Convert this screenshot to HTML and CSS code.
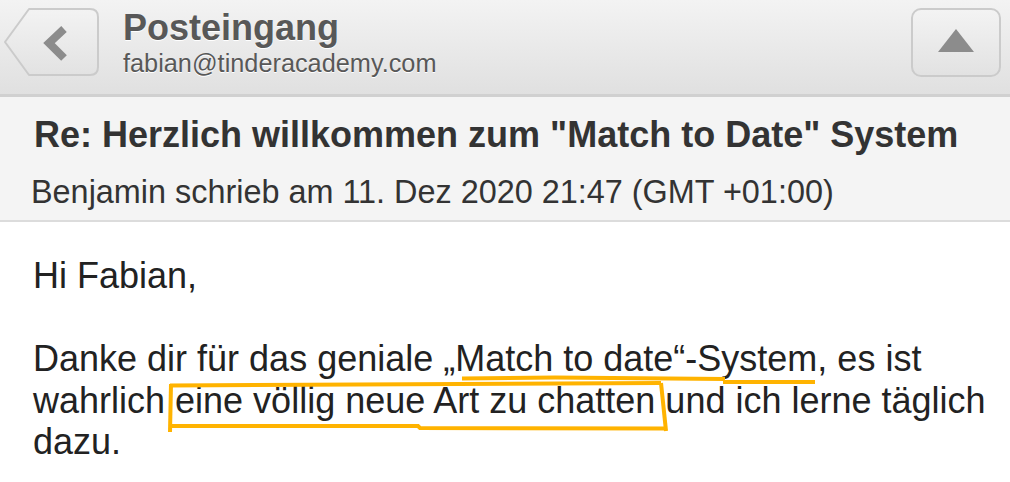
FILE: index.html
```html
<!DOCTYPE html>
<html lang="de">
<head>
<meta charset="utf-8">
<title>Posteingang</title>
<link rel="stylesheet" href="styles.css">
</head>
<body>
<div class="page">
  <header class="topbar">
    <div class="back-btn" aria-label="Zurück">
      <svg width="96" height="70" viewBox="0 0 96 70">
        <defs>
          <linearGradient id="bg1" x1="0" y1="0" x2="0" y2="1">
            <stop offset="0" stop-color="#f3f3f3"/>
            <stop offset="1" stop-color="#e2e2e2"/>
          </linearGradient>
        </defs>
        <path d="M1,35 L25,2 L86,2 Q94,2 94,10 L94,60 Q94,68 86,68 L25,68 Z" fill="url(#bg1)" stroke="#cbcbcb" stroke-width="2" stroke-linejoin="round"/>
        <path d="M60,22 L45,36 L60,51" fill="none" stroke="#8c8c8c" stroke-width="8" stroke-linecap="butt" stroke-linejoin="miter"/>
      </svg>
    </div>
    <div class="title-block">
      <div class="title">Posteingang</div>
      <div class="account">fabian@tinderacademy.com</div>
    </div>
    <div class="up-btn" aria-label="Nach oben">
      <svg width="36" height="24" viewBox="0 0 36 24">
        <path d="M18,0 L36,23 L0,23 Z" fill="#8c8c8c"/>
      </svg>
    </div>
  </header>

  <section class="meta">
    <h1 class="subject">Re: Herzlich willkommen zum "Match to Date" System</h1>
    <div class="sender">Benjamin schrieb am 11. Dez 2020 21:47 (GMT +01:00)</div>
  </section>

  <main class="message">
    <p>Hi Fabian,</p>
    <p>Danke dir für das geniale „Match to date“-System, es ist wahrlich eine völlig neue Art zu chatten und ich lerne täglich dazu.</p>
    <svg class="marks" width="1010" height="260" viewBox="0 222 1010 260">
      <g fill="none" stroke="#ffb300" stroke-width="4">
        <path d="M462,378.5 L555,377.5 L725,379"/>
        <path d="M723,382 L815,382"/>
        <path d="M170,385.5 L661,383"/>
        <path d="M661,383 L666,431"/>
        <path d="M667,428.5 L420,428 L418,426 L171,426"/>
        <path d="M171,384 L170,432"/>
      </g>
    </svg>
  </main>
</div>
</body>
</html>
```

FILE: styles.css
```css
* { box-sizing: border-box; }

html, body {
  margin: 0;
  padding: 0;
  background: #ffffff;
}

body {
  font-family: "Liberation Sans", Arial, sans-serif;
  color: #222;
}

.page {
  width: 1010px;
  height: 482px;
  overflow: hidden;
}

.topbar {
  height: 97px;
  display: flex;
  align-items: flex-start;
  padding: 7px 9px 0 4px;
  background: linear-gradient(#f3f3f3, #e0e0e0);
  border-bottom: 3px solid #d0d0d0;
}

.back-btn {
  width: 96px;
  height: 70px;
  flex: none;
}

.back-btn svg { display: block; }

.title-block {
  margin-left: 23px;
  padding-top: 1px;
  flex: 1;
  color: #585858;
  text-shadow: 0 1px 0 #fff;
}

.title {
  font-size: 36px;
  font-weight: bold;
  line-height: 40px;
}

.account {
  font-size: 25.3px;
  line-height: 30px;
}

.up-btn {
  width: 90px;
  height: 69px;
  margin-top: 1px;
  flex: none;
  border: 2px solid #cbcbcb;
  border-radius: 10px;
  background: linear-gradient(#f3f3f3, #e2e2e2);
  display: flex;
  align-items: center;
  justify-content: center;
  padding-bottom: 3px;
}

.up-btn svg { display: block; }

.meta {
  background: #f4f4f4;
  border-bottom: 2px solid #dcdcdc;
  padding: 18px 0 8px 0;
}

.subject {
  margin: 0;
  padding-left: 34px;
  font-size: 36px;
  font-weight: bold;
  line-height: 40px;
  color: #333;
}

.sender {
  margin-top: 17px;
  padding-left: 31px;
  font-size: 32.4px;
  line-height: 40px;
  color: #333;
}

.message {
  position: relative;
  padding: 33px 18px 0 33px;
  font-size: 36px;
  line-height: 41.5px;
  color: #222;
}

.message p {
  margin: 0 0 41.5px 0;
}

.marks {
  position: absolute;
  left: 0;
  top: 0;
  pointer-events: none;
}
```
